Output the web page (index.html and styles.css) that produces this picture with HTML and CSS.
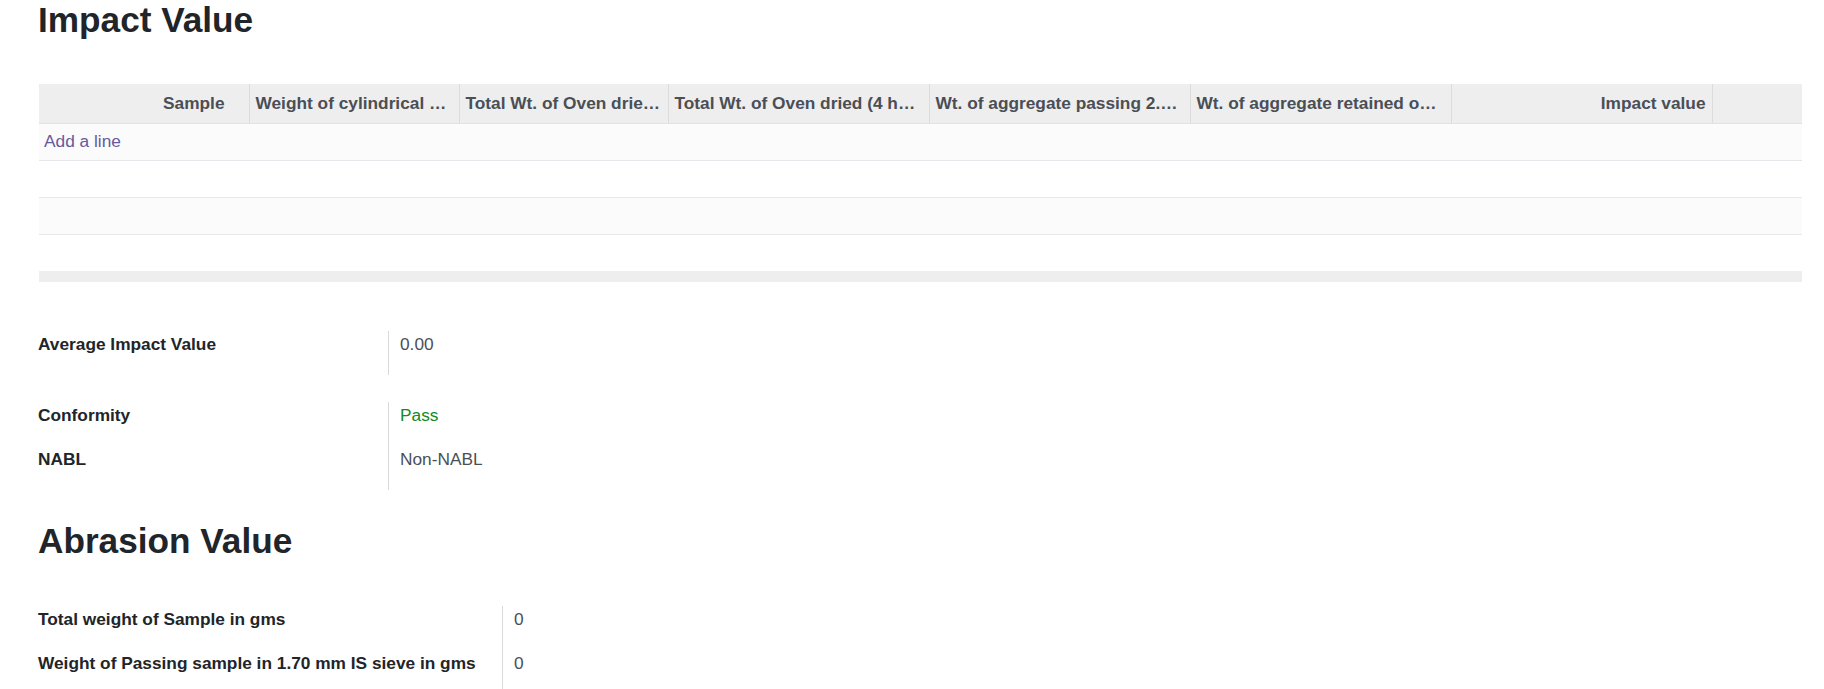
FILE: index.html
```html
<!DOCTYPE html>
<html lang="en">
<head>
<meta charset="utf-8">
<title>Impact Value</title>
<link rel="stylesheet" href="styles.css">
</head>
<body>
<div class="page">
  <h1 class="section-title">Impact Value</h1>

  <table class="list">
    <colgroup>
      <col class="c-sample">
      <col class="c-w1">
      <col class="c-w2">
      <col class="c-w3">
      <col class="c-w3">
      <col class="c-w3">
      <col class="c-w3">
      <col>
    </colgroup>
    <thead>
      <tr>
        <th class="num sample">Sample</th>
        <th>Weight of cylindrical measure</th>
        <th>Total Wt. of Oven dried sample</th>
        <th class="tight">Total Wt. of Oven dried (4 hrs) sample</th>
        <th>Wt. of aggregate passing 2.36 mm sieve</th>
        <th>Wt. of aggregate retained on 2.36 mm sieve</th>
        <th class="num">Impact value</th>
        <th></th>
      </tr>
    </thead>
    <tbody>
      <tr class="odd"><td colspan="8" class="add-cell"><a class="add-line" href="#">Add a line</a></td></tr>
      <tr><td colspan="8"></td></tr>
      <tr class="odd"><td colspan="8"></td></tr>
      <tr class="last"><td colspan="8"></td></tr>
    </tbody>
    <tfoot>
      <tr><td colspan="8"></td></tr>
    </tfoot>
  </table>

  <div class="group group-a">
    <div class="label">Average Impact Value</div>
    <div class="value">0.00</div>
  </div>

  <div class="group group-b">
    <div class="label">Conformity</div>
    <div class="value pass">Pass</div>
    <div class="label">NABL</div>
    <div class="value">Non-NABL</div>
  </div>

  <h1 class="section-title abrasion">Abrasion Value</h1>

  <div class="group group-c">
    <div class="label">Total weight of Sample in gms</div>
    <div class="value">0</div>
    <div class="label">Weight of Passing sample in 1.70 mm IS sieve in gms</div>
    <div class="value">0</div>
  </div>
</div>
</body>
</html>
```

FILE: styles.css
```css
html, body {
  margin: 0;
  padding: 0;
  background: #ffffff;
}

body {
  font-family: "Liberation Sans", Arial, sans-serif;
  font-size: 17.3px;
  color: #212529;
}

.page {
  padding: 0 22px 0 38px;
}

.section-title {
  margin: 0;
  font-size: 35.2px;
  line-height: 40px;
  font-weight: 700;
  color: #212529;
}

.section-title.abrasion {
  margin-top: 31px;
}

/* ---------- list table ---------- */
.list {
  margin: 44px 0 0 1px;
  width: calc(100% - 1px);
  border-collapse: collapse;
  table-layout: fixed;
}

.c-sample { width: 210px; }
.c-w1 { width: 210px; }
.c-w2 { width: 209px; }
.c-w3 { width: 261px; }

.list thead th {
  height: 39px;
  padding: 0 6px;
  background: #eeeeee;
  color: #4a4f56;
  font-weight: 700;
  font-size: 17.3px;
  text-align: left;
  white-space: nowrap;
  overflow: hidden;
  text-overflow: ellipsis;
  border-left: 1px solid #dcdcdc;
  border-bottom: 1px solid #dfe2e6;
  box-sizing: border-box;
}

.list thead th:first-child {
  border-left: none;
}

.list thead th.num {
  text-align: right;
}

.list thead th.sample {
  padding-right: 24px;
}

.list thead th.tight {
  padding-right: 12px;
}

.list tbody td {
  height: 36px;
  padding: 0 5px;
  border-bottom: 1px solid #e6e7ea;
  background: #ffffff;
}

.list tbody tr.odd td {
  background: #fbfbfb;
}

.list tbody tr.last td {
  border-bottom: none;
}

.add-line {
  color: #675a9c;
  text-decoration: none;
  font-size: 17.3px;
}

.list tfoot td {
  height: 11px;
  padding: 0;
  background: #eeeeee;
}

/* ---------- field groups ---------- */
.group {
  display: grid;
  grid-template-columns: 350px 1fr;
}

.group-a {
  margin-top: 49px;
}

.group-b {
  margin-top: 27px;
}

.group-c {
  margin-top: 45px;
  grid-template-columns: 464px 1fr;
}

.label,
.value {
  line-height: 26px;
  padding-bottom: 18px;
}

.label {
  font-weight: 700;
  color: #212529;
}

.value {
  border-left: 1px solid #d9d9d9;
  padding-left: 11px;
  color: #4a4f56;
}

.value.pass {
  color: #138a24;
}
```
